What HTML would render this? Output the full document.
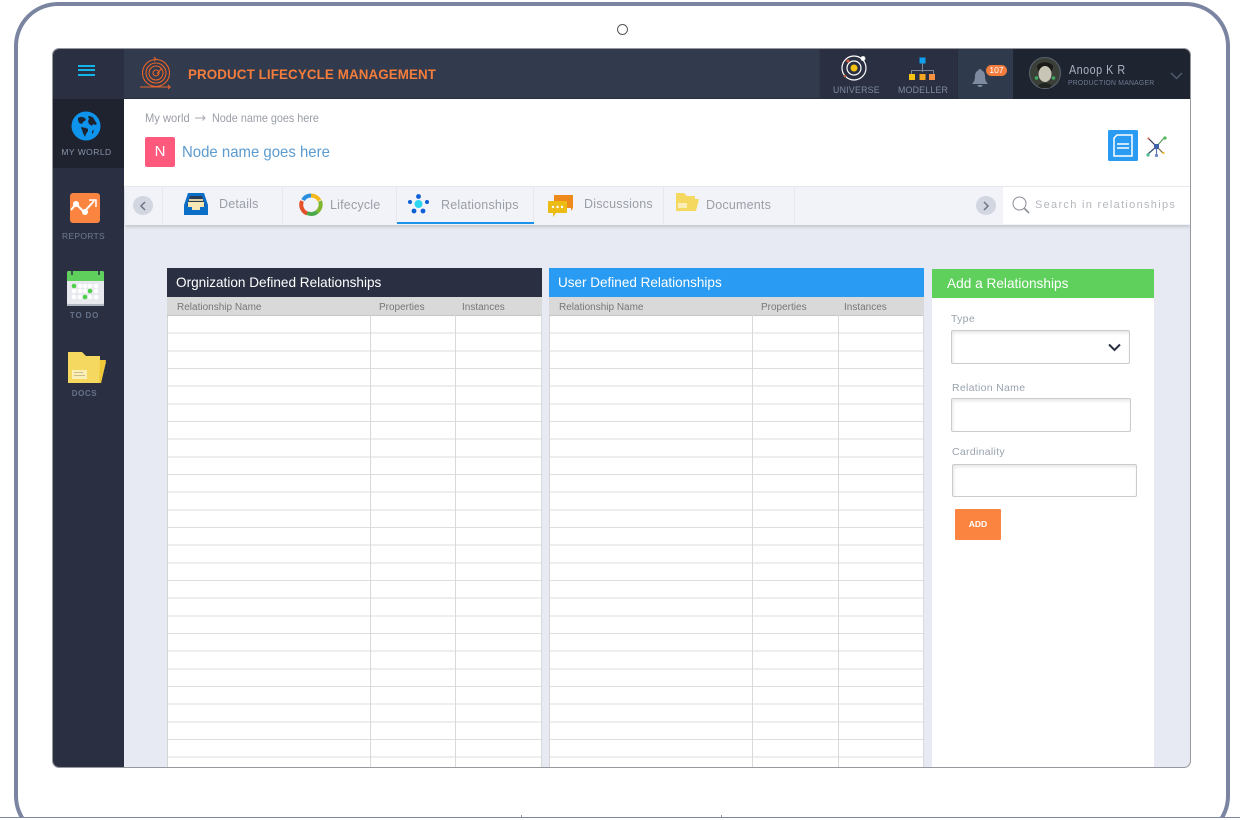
<!DOCTYPE html>
<html><head><meta charset="utf-8"><title>Product Lifecycle Management</title>
<style>
*{box-sizing:border-box}
html,body{margin:0;padding:0;background:#fff;width:1240px;height:820px;overflow:hidden}
#w{position:absolute;left:0;top:0;width:1240px;height:820px;overflow:hidden;font-family:"Liberation Sans",sans-serif}
.a{position:absolute}
.t{position:absolute;white-space:nowrap;line-height:1;transform-origin:0 0}
.tbl{position:absolute;top:268px;width:375px;height:499px;overflow:hidden}
.tbl .h{height:29px;color:#fff;font-size:14px;line-height:29px;padding-left:9px}
.tbl .h span{display:inline-block;transform-origin:0 50%}
.tbl .c{height:19px;background:#d9d9d9;border-bottom:1px solid #c6c6c6;position:relative;font-size:10px;color:#777}
.tbl .c span{position:absolute;top:5px}
.tbl .b{position:absolute;left:0;right:0;top:48px;bottom:0;background-color:#fff;background-image:repeating-linear-gradient(to bottom,transparent 0,transparent 16.67px,#dedede 16.67px,#dedede 17.67px);border-left:1px solid #d5d5d5}
.tbl .v{position:absolute;top:29px;bottom:0;width:1px;background:#d9d9d9}
.lbl{position:absolute;font-size:10.5px;color:#9aa3af;letter-spacing:.3px;line-height:1;white-space:nowrap}
.inp{position:absolute;background:#fff;border:1px solid #cbcbcb;border-radius:2px;box-shadow:inset 1px 2px 3px rgba(0,0,0,.1)}
.tab{position:absolute;top:187px;height:37px;border-right:1px solid #e6e8ee}
.tl{position:absolute;font-size:12.5px;color:#9b9ea6;line-height:1;white-space:nowrap;letter-spacing:.2px}
.side{position:absolute;left:53px;width:71px;text-align:center;font-size:8.5px;color:#6f7b92;line-height:1;letter-spacing:.3px}
</style></head><body><div id="w">

<!-- tablet frame -->
<div class="a" style="left:14px;top:2px;width:1216px;height:838px;border:4px solid #7b84a0;border-radius:44px"></div>
<div class="a" style="left:0;top:818px;width:1240px;height:2px;background:#fff"></div>
<div class="a" style="left:0;top:817px;width:1240px;height:1px;background:#7b84a0"></div>
<div class="a" style="left:521px;top:815px;width:1px;height:2px;background:#999"></div>
<div class="a" style="left:721px;top:815px;width:1px;height:2px;background:#999"></div>
<div class="a" style="left:617px;top:24px;width:11px;height:11px;border:1px solid #555;border-radius:50%"></div>

<!-- app -->
<div class="a" style="left:52px;top:48px;width:1139px;height:720px;border-radius:7px;overflow:hidden;background:#e7eaf2"></div>
<div class="a" style="left:53px;top:49px;width:1137px;height:718px;border-radius:6px;overflow:hidden">
  <div class="a" style="left:0;top:0;width:71px;height:718px;background:#2a3042"></div>
  <div class="a" style="left:0;top:50px;width:71px;height:69px;background:#1e232f"></div>
  <div class="a" style="left:71px;top:0;width:1066px;height:50px;background:#313b4d;border-bottom:1px solid #252c3a"></div>
  <div class="a" style="left:766px;top:0;width:138px;height:50px;background:#2a3042;border-left:1px solid #2d3546"></div>
  <div class="a" style="left:904px;top:0;width:56px;height:50px;background:#2f3a4c;border-left:1px solid #262c3b"></div>
  <div class="a" style="left:960px;top:0;width:177px;height:50px;background:#1e2430"></div>
  <div class="a" style="left:71px;top:50px;width:1066px;height:87px;background:#fff"></div>
  <div class="a" style="left:72px;top:137px;width:1065px;height:39px;background:#f1f3f8;border-top:1px solid #e6e8ee;box-shadow:0 2px 3px rgba(0,0,0,.15)"></div>
  <div class="a" style="left:950px;top:138px;width:187px;height:37px;background:#fff"></div>
  <div class="a" style="left:879px;top:249px;width:222px;height:469px;background:#fff"></div>
</div>

<!-- hamburger -->
<div class="a" style="left:78px;top:65px;width:17px;height:2px;background:#12b5ea"></div>
<div class="a" style="left:78px;top:69px;width:17px;height:2px;background:#12b5ea"></div>
<div class="a" style="left:78px;top:74px;width:17px;height:2px;background:#12b5ea"></div>

<!-- logo -->
<svg class="a" style="left:139px;top:57px" width="35" height="35" viewBox="0 0 35 35" fill="none" stroke="#e8642a" stroke-width="1.100">
  <circle cx="17" cy="16" r="13.500"/><circle cx="17" cy="16" r="10"/><circle cx="17" cy="16" r="7"/><circle cx="17" cy="16" r="3"/>
  <path d="M18 17l4-5M1 30h30l-2-2M31 30l-2 2M17 2l-2-2M17 2l-2 2"/>
</svg>
<div class="t" style="left:188px;top:67px;font-size:14px;font-weight:bold;color:#f47c3c;letter-spacing:.12px;transform:scaleX(.954)">PRODUCT LIFECYCLE MANAGEMENT</div>

<!-- universe -->
<svg class="a" style="left:840px;top:54px" width="28" height="28" viewBox="0 0 28 28" fill="none">
  <circle cx="14" cy="14" r="12" stroke="#fff" stroke-width="1.200"/>
  <circle cx="14" cy="14" r="7" stroke="#fff" stroke-width="1.200"/>
  <circle cx="14" cy="14" r="3.500" fill="#f5c211"/>
  <circle cx="23" cy="4.500" r="2.400" fill="#fff"/><circle cx="8" cy="7" r="1.500" fill="#e0593a"/><circle cx="5" cy="22" r="1.300" fill="#c4673c"/>
</svg>
<div class="t" style="left:833px;top:86px;font-size:9.500px;color:#7f8ba1;letter-spacing:.3px;transform:scaleX(.92)">UNIVERSE</div>
<!-- modeller -->
<svg class="a" style="left:908px;top:57px" width="28" height="25" viewBox="0 0 28 25" fill="none">
  <rect x="11.500" y="0.500" width="6" height="6" fill="#0fa0f0"/>
  <path d="M14.500 6v9M3.500 17v-3.500h22V17" stroke="#7a8598"/>
  <rect x="1" y="17" width="6" height="6" fill="#f5c211"/><rect x="11.500" y="17" width="6" height="6" fill="#f5a623"/><rect x="21" y="17" width="6" height="6" fill="#f59142"/>
</svg>
<div class="t" style="left:898px;top:86px;font-size:9.500px;color:#7f8ba1;letter-spacing:.2px;transform:scaleX(.93)">MODELLER</div>
<!-- bell -->
<svg class="a" style="left:971px;top:69px" width="18" height="19" viewBox="0 0 18 19"><path d="M9 0c1 0 1.500.7 1.500 1.400C13 2.200 14 4.500 14 7.500c0 3 1 5.500 3 7.500H1c2-2 3-4.500 3-7.500 0-3 1-5.300 3.500-6.100C7.500.7 8 0 9 0zM6.500 16h5c0 1.300-1 2-2.500 2s-2.500-.7-2.500-2z" fill="#7d8aa0"/></svg>
<div class="a" style="left:986px;top:65px;width:21px;height:11px;border-radius:6px;background:#f47c3c;color:#fff;font-size:8.500px;line-height:11px;text-align:center">107</div>
<!-- avatar -->
<svg class="a" style="left:1029px;top:57px" width="32" height="32" viewBox="0 0 32 32">
  <circle cx="16" cy="16" r="15.500" fill="#3a3f38" stroke="#5a6470"/>
  <path d="M8 9c3-5 13-5 16 0l-1 5H9z" fill="#1a1a18"/>
  <ellipse cx="16" cy="17" rx="6.500" ry="8" fill="#c9c5b6"/>
  <path d="M9 29c2-4 12-4 14 0l-3 2h-8z" fill="#22241f"/>
  <circle cx="7.500" cy="21" r="1.800" fill="#3fa860"/><circle cx="24.500" cy="21" r="1.800" fill="#3fa860"/>
</svg>
<div class="t" style="left:1069px;top:64px;font-size:12.500px;color:#aab3c4;letter-spacing:.6px;transform:scaleX(.86)">Anoop K R</div>
<div class="t" style="left:1068px;top:79px;font-size:7.500px;color:#6f7b92;letter-spacing:.25px;transform:scaleX(.91)">PRODUCTION MANAGER</div>
<svg class="a" style="left:1170px;top:72px" width="13" height="8" viewBox="0 0 13 8" fill="none"><path d="M1 1l5.500 5.500L12 1" stroke="#4f5a6e" stroke-width="1.500"/></svg>

<!-- sidebar items -->
<svg class="a" style="left:71px;top:111px" width="30" height="30" viewBox="0 0 30 30">
  <circle cx="15" cy="15" r="14.500" fill="#0f94ee"/>
  <path d="M7 7c3-2 5-1 7 0l1 2-3 2-1 2-3-1-1-3zM17 5c3 0 5 1 6 3l3 5-2 1-2-1-1 2-3-2-1-3 1-2zM10 16l5 1 2 1 0 2-2 3-1 3-2-4-1-3zM21 20l2-1-1 3-1 1z" fill="#1d2330"/>
</svg>
<div class="side" style="top:148px;left:51px;color:#8a94a8;letter-spacing:.45px">MY WORLD</div>

<svg class="a" style="left:70px;top:193px" width="30" height="30" viewBox="0 0 30 30">
  <rect width="30" height="30" rx="3" fill="#fb8540"/>
  <path d="M1 17l5-6 8 8 10-11" fill="none" stroke="#fff" stroke-width="2"/><path d="M19 7h7v7" fill="none" stroke="#fff" stroke-width="1.500"/>
  <circle cx="6" cy="11" r="3" fill="#fff"/><circle cx="15" cy="19" r="3" fill="#fff"/>
</svg>
<div class="side" style="top:232px;left:48px;color:#6f7b92">REPORTS</div>

<svg class="a" style="left:67px;top:271px" width="37" height="35" viewBox="0 0 37 35">
  <rect y="0" width="37" height="34" rx="2" fill="#e7e9ee"/>
  <path d="M0 10V2a2 2 0 0 1 2-2h33a2 2 0 0 1 2 2v8z" fill="#5fd05c"/>
  <rect y="33" width="37" height="2" fill="#b4b8c2"/>
  <g fill="#fff"><circle cx="13" cy="15" r="2.300"/><circle cx="18" cy="15" r="2.300"/><circle cx="23" cy="15" r="2.300"/><circle cx="29" cy="15" r="2.300"/>
  <circle cx="7" cy="20" r="2.300"/><circle cx="13" cy="20" r="2.300"/><circle cx="18" cy="20" r="2.300"/><circle cx="29" cy="20" r="2.300"/>
  <circle cx="7" cy="26" r="2.300"/><circle cx="13" cy="26" r="2.300"/><circle cx="23" cy="26" r="2.300"/><circle cx="29" cy="26" r="2.300"/></g>
  <g fill="#4fd04a"><circle cx="7" cy="15" r="2.300"/><circle cx="23" cy="20" r="2.300"/><circle cx="18" cy="26" r="2.300"/></g>
  <path d="M5 0v4M32 0v4" stroke="#2a3042" stroke-width="1.500"/>
</svg>
<div class="side" style="top:312px;left:49px;font-weight:bold;font-size:8px;letter-spacing:.8px;color:#67728a">TO DO</div>

<svg class="a" style="left:68px;top:352px" width="38" height="32" viewBox="0 0 38 32">
  <path d="M0 0h14l4 4h14v6h6l-5 21H0z" fill="#f5d860"/><path d="M32 8h6l-5 23h-2z" fill="#f0c93a"/>
  <rect x="4" y="18" width="15" height="9" fill="#fbeeb6"/><path d="M6 20.500h9M6 23.500h11" stroke="#c9bd85"/>
</svg>
<div class="side" style="top:390px;left:49px;font-weight:bold;font-size:8px;letter-spacing:.6px;color:#67728a">DOCS</div>

<!-- breadcrumb -->
<div class="t" style="left:145px;top:112px;font-size:12px;color:#9a9ea7;transform:scaleX(.93)">My world</div>
<svg class="a" style="left:195px;top:114px" width="11" height="8" viewBox="0 0 11 8" fill="none" stroke="#a6aab2"><path d="M0 4h10M7.500 1.500L10 4 7.500 6.500"/></svg>
<div class="t" style="left:212px;top:112px;font-size:12px;color:#9a9ea7;transform:scaleX(.9)">Node name goes here</div>
<div class="a" style="left:145px;top:137px;width:30px;height:30px;border-radius:2px;background:#ff5a7e;color:#fff;font-size:15px;line-height:30px;text-align:center">N</div>
<div class="t" style="left:182px;top:145px;font-size:16px;color:#5b9bd0;transform:scaleX(.934)">Node name goes here</div>

<!-- right icons -->
<svg class="a" style="left:1108px;top:130px" width="30" height="31" viewBox="0 0 30 31">
  <rect width="30" height="31" rx="1.500" fill="#2a9bf3"/>
  <path d="M9 5h15v21H6V8z" fill="none" stroke="#fff" stroke-width="1.500"/><path d="M9 14h12M9 18h12" stroke="#fff" stroke-width="1.500"/>
</svg>
<svg class="a" style="left:1145px;top:135px" width="23" height="23" viewBox="0 0 23 23" stroke-width="1.200">
  <path d="M11.500 11.500L19 3" stroke="#5b9b5b"/><path d="M11.500 11.500L3 19" stroke="#31506e"/><path d="M11.500 11.500L4 4" stroke="#2d3a50"/><path d="M11.500 11.500L18 18" stroke="#7c6a3c"/><path d="M11.500 11.500v8" stroke="#5d78b8"/>
  <rect x="9" y="9" width="5" height="5" fill="#3d62a8"/>
  <circle cx="20" cy="3" r="1.600" fill="#4db85c"/><circle cx="3" cy="20" r="1.600" fill="#4fc08a"/><circle cx="3.500" cy="3.500" r="1.100" fill="#e56a4b"/><circle cx="18.500" cy="18" r="1.100" fill="#f0c020"/><circle cx="11.500" cy="20.500" r="1.600" fill="#7088c8"/>
</svg>

<!-- tabs -->
<div class="a" style="left:133px;top:196px;width:20px;height:19px;border-radius:50%;background:#d2d6e0"></div>
<svg class="a" style="left:139px;top:201px" width="7" height="10" viewBox="0 0 7 10" fill="none"><path d="M6 1L2 5l4 4" stroke="#6c7484" stroke-width="1.500"/></svg>
<div class="tab" style="left:125px;width:38px"></div>
<div class="tab" style="left:163px;width:120px"></div>
<div class="tab" style="left:283px;width:114px"></div>
<div class="tab" style="left:397px;width:137px"></div>
<div class="tab" style="left:534px;width:130px"></div>
<div class="tab" style="left:664px;width:131px"></div>
<div class="a" style="left:397px;top:222px;width:137px;height:2px;background:#1b93ea"></div>

<svg class="a" style="left:184px;top:193px" width="24" height="22" viewBox="0 0 24 22">
  <path d="M4 0h16l4 12v10H0V12z" fill="#0b6fc8"/><path d="M3 13L6 3h12l3 10z" fill="#2a3b55"/>
  <path d="M5 6h14v2H5z" fill="#d9cfa2"/><path d="M4 9h16v5H4z" fill="#f6e8b4"/><path d="M8 14h8v3H8z" fill="#f6e8b4"/>
</svg>
<div class="tl" style="left:219px;top:198px">Details</div>
<svg class="a" style="left:299px;top:193px" width="24" height="23" viewBox="0 0 24 23" fill="none" stroke-width="4">
  <path d="M4 7a9.500 9.500 0 0 1 8-4.500" stroke="#2a8fe0"/><path d="M12 2.500a9.500 9.500 0 0 1 8.500 5" stroke="#f5b81c"/><path d="M21 8a9.500 9.500 0 0 1-3 11" stroke="#7fb62e"/><path d="M18 19a9.500 9.500 0 0 1-10 1" stroke="#4aa84a"/><path d="M8 20.500A9.500 9.500 0 0 1 3 8" stroke="#e4502a"/>
</svg>
<div class="tl" style="left:330px;top:199px">Lifecycle</div>
<svg class="a" style="left:408px;top:194px" width="21" height="20" viewBox="0 0 21 20">
  <circle cx="10.500" cy="10" r="4" fill="#2fd6f0"/>
  <g fill="#0c5fd6"><circle cx="10.500" cy="2.500" r="2.400"/><circle cx="2" cy="8" r="2"/><circle cx="19" cy="8" r="2"/><circle cx="6" cy="17" r="2.400"/><circle cx="15" cy="17" r="2.400"/></g>
</svg>
<div class="tl" style="left:441px;top:199px">Relationships</div>
<svg class="a" style="left:548px;top:195px" width="26" height="23" viewBox="0 0 26 23">
  <path d="M6 0h19v13l-2 3v-3H6z" fill="#ee8a1c"/>
  <path d="M1 6h17a1 1 0 0 1 1 1v10a1 1 0 0 1-1 1H8l-3 4v-4H1a1 1 0 0 1-1-1V7a1 1 0 0 1 1-1z" fill="#ecbc14"/>
  <g fill="#fff"><circle cx="5" cy="12" r="1.200"/><circle cx="9.500" cy="12" r="1.200"/><circle cx="14" cy="12" r="1.200"/></g>
</svg>
<div class="tl" style="left:584px;top:198px">Discussions</div>
<svg class="a" style="left:676px;top:193px" width="23" height="18" viewBox="0 0 23 18">
  <path d="M0 0h8l3 3h8v3h4l-3 12H0z" fill="#f5d860"/><rect x="2" y="10" width="9" height="5" fill="#fbeeb6"/>
</svg>
<div class="tl" style="left:706px;top:199px">Documents</div>
<div class="a" style="left:976px;top:196px;width:20px;height:19px;border-radius:50%;background:#d2d6e0"></div>
<svg class="a" style="left:983px;top:201px" width="7" height="10" viewBox="0 0 7 10" fill="none"><path d="M1 1l4 4-4 4" stroke="#6c7484" stroke-width="1.500"/></svg>
<svg class="a" style="left:1012px;top:196px" width="18" height="18" viewBox="0 0 18 18" fill="none" stroke="#8a8e96"><circle cx="7.500" cy="7.500" r="6.500"/><path d="M12.500 12.500L17 17" stroke-width="1.600"/></svg>
<div class="t" style="left:1035px;top:200px;font-size:11px;color:#b4b7bd;letter-spacing:1.3px">Search in relationships</div>

<!-- tables -->
<div class="tbl" style="left:167px">
  <div class="h" style="background:#2a3042"><span style="transform:scaleX(.97)">Orgnization Defined Relationships</span></div>
  <div class="c"><span style="left:10px">Relationship Name</span><span style="left:212px">Properties</span><span style="left:295px">Instances</span></div>
  <div class="b"></div>
  <div class="v" style="left:203px"></div><div class="v" style="left:288px"></div><div class="v" style="left:374px"></div>
</div>
<div class="tbl" style="left:549px">
  <div class="h" style="background:#2a9bf3"><span style="transform:scaleX(.965)">User Defined Relationships</span></div>
  <div class="c"><span style="left:10px">Relationship Name</span><span style="left:212px">Properties</span><span style="left:295px">Instances</span></div>
  <div class="b"></div>
  <div class="v" style="left:203px"></div><div class="v" style="left:289px"></div><div class="v" style="left:374px"></div>
</div>

<!-- add panel -->
<div class="a" style="left:932px;top:269px;width:222px;height:29px;background:#5fd05c;color:#fff;font-size:14px;line-height:29px;padding-left:15px"><span style="display:inline-block;transform:scaleX(.975);transform-origin:0 50%">Add a Relationships</span></div>
<div class="lbl" style="left:951px;top:314px">Type</div>
<div class="inp" style="left:951px;top:330px;width:179px;height:34px"></div>
<svg class="a" style="left:1108px;top:343px" width="13" height="9" viewBox="0 0 13 9" fill="none"><path d="M1 1.500l5.500 5.500L12 1.500" stroke="#2a3042" stroke-width="2"/></svg>
<div class="lbl" style="left:952px;top:383px">Relation Name</div>
<div class="inp" style="left:951px;top:398px;width:180px;height:34px"></div>
<div class="lbl" style="left:952px;top:447px">Cardinality</div>
<div class="inp" style="left:952px;top:464px;width:185px;height:33px"></div>
<div class="a" style="left:955px;top:509px;width:46px;height:31px;background:#fb8540;border-radius:1px;color:#fff;font-size:8.500px;font-weight:bold;line-height:31px;text-align:center">ADD</div>

<!-- app border on top -->
<div class="a" style="left:52px;top:48px;width:1139px;height:720px;border:1px solid #96989e;border-radius:7px"></div>

</div></body></html>
